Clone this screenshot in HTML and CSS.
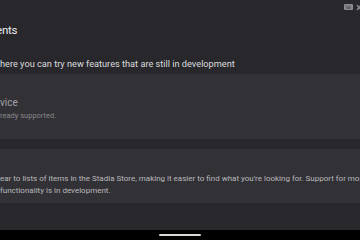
FILE: index.html
```html
<!DOCTYPE html>
<html lang="en">
<head>
    <meta charset="UTF-8">
    <meta name="viewport" content="width=device-width, initial-scale=1.0">
    <title>Experiments</title>
    <link rel="stylesheet" href="styles.css">
</head>
<body>
    <div class="screen">
        <div class="status-bar">
            <svg class="status-icon" width="9" height="6" viewBox="0 0 9 6">
                <rect x="0" y="0" width="9" height="6" rx="1" fill="#8d8c90"/>
                <rect x="1.5" y="1.5" width="1" height="1" fill="#3a393e"/>
                <rect x="3.5" y="1.5" width="1" height="1" fill="#3a393e"/>
                <rect x="5.5" y="1.5" width="1" height="1" fill="#3a393e"/>
                <rect x="2" y="3.5" width="5" height="1" fill="#3a393e"/>
            </svg>
            <svg class="status-icon" width="6" height="7" viewBox="0 0 6 7">
                <path d="M1 1 L5 6 M5 1 L1 6" stroke="#8d8c90" stroke-width="1.4"/>
            </svg>
        </div>

        <main class="content">
            <h1 class="page-title">ents</h1>
            <p class="page-subtitle">here you can try new features that are still in development</p>

            <div class="card card-disabled">
                <div class="card-title">vice</div>
                <div class="card-note">ready supported.</div>
            </div>

            <div class="card card-filters">
                <div class="card-text">ear to lists of items in the Stadia Store, making it easier to find what you're looking for. Support for more</div>
                <div class="card-text">functionality is in development.</div>
            </div>
        </main>

        <nav class="nav-bar">
            <div class="home-pill"></div>
        </nav>
    </div>
</body>
</html>
```

FILE: styles.css
```css
* {
    margin: 0;
    padding: 0;
    box-sizing: border-box;
}

body {
    font-family: Roboto, 'Noto Sans', sans-serif;
    background: #28272c;
    color: #e4e4e6;
    width: 360px;
    height: 240px;
    overflow: hidden;
}

.screen {
    display: flex;
    flex-direction: column;
    height: 240px;
}

.status-bar {
    height: 14px;
    display: flex;
    justify-content: flex-end;
    align-items: flex-start;
    gap: 3px;
    padding-top: 4px;
    margin-right: -2px;
}

.content {
    flex: 1;
    display: flex;
    flex-direction: column;
    overflow: hidden;
}

.page-title {
    margin-top: 9px;
    margin-left: -4px;
    font-size: 11.5px;
    line-height: 14px;
    font-weight: 400;
    letter-spacing: -0.2px;
    color: #ececee;
}

.page-subtitle {
    margin-top: 21px;
    font-size: 9.2px;
    line-height: 12px;
    color: #dcdcde;
    white-space: nowrap;
}

.card {
    background: #323136;
    overflow: hidden;
}

.card-disabled {
    margin-top: 4px;
    height: 65px;
    padding-top: 23px;
}

.card-title {
    font-size: 10px;
    line-height: 12px;
    color: #a2a1a5;
}

.card-note {
    margin-top: 1.5px;
    font-size: 7.5px;
    line-height: 9px;
    color: #88878b;
}

.card-filters {
    margin-top: 10px;
    height: 54px;
    padding-top: 24px;
}

.card-text {
    font-size: 8px;
    line-height: 12px;
    color: #bab9bd;
    white-space: nowrap;
}

.nav-bar {
    height: 10px;
    background: #000;
    display: flex;
    justify-content: center;
    padding-top: 4px;
}

.home-pill {
    width: 42px;
    height: 2px;
    border-radius: 1px;
    background: #d8d8d8;
}
```
